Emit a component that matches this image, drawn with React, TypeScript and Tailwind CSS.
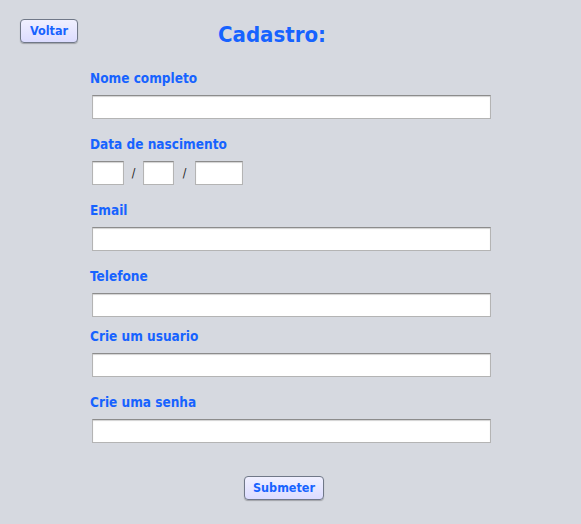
import { useState } from "react";

const label = "block h-4 text-[13.5px] leading-4 font-bold text-[#1763ff]";
const field =
  "block h-6 bg-white border border-[#b4b4b4] border-t-[#8c8c8c] shadow-[inset_0_1px_1px_rgba(0,0,0,0.18)] outline-none px-1 text-[13px]";
const btn =
  "h-6 rounded-[4px] border border-[#707888] bg-gradient-to-b from-[#f0f0ff] to-[#dcdcff] text-[12.5px] font-bold text-[#1763ff] shadow-[0_1px_1px_rgba(0,0,0,0.25)]";

export default function App() {
  const [form, setForm] = useState({ nome: "", dia: "", mes: "", ano: "", email: "", tel: "", user: "", senha: "" });
  const set = (k: string) => (e: React.ChangeEvent<HTMLInputElement>) => setForm((p) => ({ ...p, [k]: e.target.value }));

  return (
    <div className="min-h-[524px] w-full bg-[#d6d9e0] font-['DejaVu_Sans_Condensed','DejaVu_Sans',sans-serif]">
      <div className="flex items-start h-[70px] pt-[19px] pl-5">
        <button className={btn + " w-[58px]"}>Voltar</button>
        <h1 className="ml-[140px] mt-[2px] text-[22px] leading-7 font-bold text-[#1763ff]">Cadastro:</h1>
      </div>

      <form className="pl-[90px]" onSubmit={(e) => e.preventDefault()}>
        <label className={label}>Nome completo</label>
        <input className={field + " w-[399px] mt-[9px] ml-[2px]"} value={form.nome} onChange={set("nome")} />

        <label className={label + " mt-[17px]"}>Data de nascimento</label>
        <div className="flex items-center mt-[9px] pl-[2px]">
          <input className={field + " w-8"} value={form.dia} onChange={set("dia")} />
          <span className="w-[19px] text-center text-[12px] text-[#222]">/</span>
          <input className={field + " w-[31px]"} value={form.mes} onChange={set("mes")} />
          <span className="w-[21px] text-center text-[12px] text-[#222]">/</span>
          <input className={field + " w-12"} value={form.ano} onChange={set("ano")} />
        </div>

        <label className={label + " mt-[17px]"}>Email</label>
        <input className={field + " w-[399px] mt-[9px] ml-[2px]"} value={form.email} onChange={set("email")} />

        <label className={label + " mt-[17px]"}>Telefone</label>
        <input className={field + " w-[399px] mt-[9px] ml-[2px]"} value={form.tel} onChange={set("tel")} />

        <label className={label + " mt-[11px]"}>Crie um usuario</label>
        <input className={field + " w-[399px] mt-[9px] ml-[2px]"} value={form.user} onChange={set("user")} />

        <label className={label + " mt-[17px]"}>Crie uma senha</label>
        <input type="password" className={field + " w-[399px] mt-[9px] ml-[2px]"} value={form.senha} onChange={set("senha")} />

        <div className="pl-[154px] mt-[32px]">
          <button type="submit" className={btn + " w-20"}>Submeter</button>
        </div>
      </form>
    </div>
  );
}
